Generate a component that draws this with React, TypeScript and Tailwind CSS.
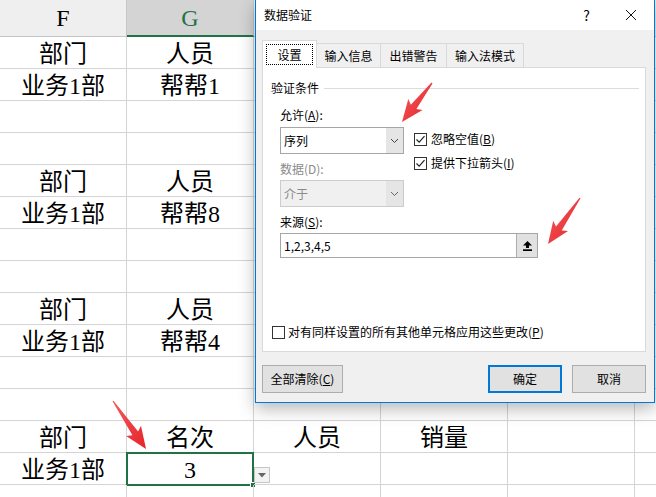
import React from "react";

type Row = [string, string, string, string];

const rows: Row[] = [
  ["部门", "人员", "", ""],
  ["业务1部", "帮帮1", "", ""],
  ["", "", "", ""],
  ["", "", "", ""],
  ["部门", "人员", "", ""],
  ["业务1部", "帮帮8", "", ""],
  ["", "", "", ""],
  ["", "", "", ""],
  ["部门", "人员", "", ""],
  ["业务1部", "帮帮4", "", ""],
  ["", "", "", ""],
  ["", "", "", ""],
  ["部门", "名次", "人员", "销量"],
  ["业务1部", "3", "", ""],
  ["", "", "", ""],
];

function arrowPoints(x1: number, y1: number, x2: number, y2: number) {
  const dx = x2 - x1;
  const dy = y2 - y1;
  const L = Math.hypot(dx, dy);
  const ux = dx / L;
  const uy = dy / L;
  const nx = -uy;
  const ny = ux;
  const hl = 19;
  const hw = 9;
  const sw = 3.5;
  const notch = 3;
  const bx = x2 - ux * hl;
  const by = y2 - uy * hl;
  const kx = x2 - ux * (hl + notch);
  const ky = y2 - uy * (hl + notch);
  const p = (x: number, y: number) => `${x.toFixed(1)},${y.toFixed(1)}`;
  return [
    p(x1 + nx * 0.6, y1 + ny * 0.6),
    p(bx + nx * sw, by + ny * sw),
    p(kx + nx * hw, ky + ny * hw),
    p(x2, y2),
    p(kx - nx * hw, ky - ny * hw),
    p(bx - nx * sw, by - ny * sw),
    p(x1 - nx * 0.6, y1 - ny * 0.6),
  ].join(" ");
}

function Check() {
  return (
    <span className="w-[13px] h-[13px] border border-[#333333] bg-white flex items-center justify-center">
      <svg width="11" height="11" viewBox="0 0 11 11">
        <polyline points="1.5,5.5 4.2,8.2 9.5,2.2" fill="none" stroke="#222" strokeWidth="1.2" />
      </svg>
    </span>
  );
}

function Chevron({ color = "#444" }: { color?: string }) {
  return (
    <svg width="9" height="6" viewBox="0 0 9 6">
      <polyline points="1,1 4.5,4.5 8,1" fill="none" stroke={color} strokeWidth="1" />
    </svg>
  );
}

function Btn({ children, w, primary }: { children: React.ReactNode; w: string; primary?: boolean }) {
  return (
    <div
      className={`${w} h-[28px] bg-[#e1e1e1] flex items-center justify-center ${
        primary ? "border-2 border-[#0078d7]" : "border border-[#adadad]"
      }`}
    >
      {children}
    </div>
  );
}

export default function App() {
  return (
    <div className="relative w-[656px] h-[497px] overflow-hidden bg-white">
      {/* spreadsheet */}
      <div className="flex flex-col font-['Liberation_Serif','Noto_Sans_CJK_SC',serif] text-black">
        <div className="flex h-[37px]">
          <div className="w-[127px] bg-[#efefef] border-r border-b border-[#c6c6c6] flex items-center justify-center text-[24px] leading-none">
            F
          </div>
          <div className="w-[127px] bg-[#d4d4d4] border-r border-[#c6c6c6] border-b-2 border-b-[#217346] flex items-center justify-center text-[24px] leading-none text-[#217346]">
            G
          </div>
          <div className="w-[127px] bg-[#efefef] border-r border-b border-[#c6c6c6]" />
          <div className="w-[127px] bg-[#efefef] border-r border-b border-[#c6c6c6]" />
          <div className="w-[127px] bg-[#efefef] border-r border-b border-[#c6c6c6]" />
          <div className="flex-1 bg-[#efefef] border-b border-[#c6c6c6]" />
        </div>
        {rows.map((r, i) => (
          <div key={i} className="flex h-[32px]">
            {r.map((c, j) => (
              <div
                key={j}
                className="relative w-[127px] border-r border-b border-[#d4d4d4] flex items-center justify-center pt-[3px] text-[24px] leading-none"
              >
                {c}
                {i === 13 && j === 1 && (
                  <>
                    <div className="absolute -left-px -top-px w-[128px] h-[34px] border-2 border-[#217346]" />
                    <div className="absolute right-[-3px] bottom-[-4px] w-[6px] h-[6px] bg-[#217346] border border-white" />
                    <div className="absolute left-[calc(100%+1px)] top-[14px] w-[16px] h-[16px] bg-[#f3f3f3] border border-[#c6c6c6] flex items-center justify-center">
                      <svg width="8" height="5" viewBox="0 0 8 5">
                        <polygon points="0,0 8,0 4,4.5" fill="#666" />
                      </svg>
                    </div>
                  </>
                )}
              </div>
            ))}
            <div className="w-[127px] border-r border-b border-[#d4d4d4]" />
            <div className="flex-1 border-b border-[#d4d4d4]" />
          </div>
        ))}
      </div>

      {/* dialog */}
      <div className="absolute left-[255px] top-0 w-[400px] h-[403px] bg-[#f0f0f0] border border-t-0 border-[#0078d7] shadow-[0_6px_16px_rgba(0,0,0,0.28)] flex flex-col font-['Noto_Sans_CJK_SC',sans-serif] text-[12px] leading-[16px] text-black">
        <div className="h-[30px] bg-white flex items-center pl-[8px] pr-[17px]">
          <span>数据验证</span>
          <span className="ml-auto text-[14px] mr-[35px]">?</span>
          <svg width="12" height="12" viewBox="0 0 12 12">
            <path d="M1 1 L11 11 M11 1 L1 11" stroke="#111" strokeWidth="1" />
          </svg>
        </div>
        <div className="flex flex-col pl-[6px] pr-[8px]">
          <div className="flex items-end mt-[10px] relative z-10 -mb-px">
            <div className="w-[55px] h-[28px] bg-white border border-b-0 border-[#d9d9d9] pt-[3px] px-[3px]">
              <div className="h-[21px] border border-dotted border-black flex items-center justify-center">设置</div>
            </div>
            <div className="w-[64px] h-[25px] border-t border-r border-[#d9d9d9] flex items-center justify-center">输入信息</div>
            <div className="w-[66px] h-[25px] border-t border-r border-[#d9d9d9] flex items-center justify-center">出错警告</div>
            <div className="w-[77px] h-[25px] border-t border-r border-[#d9d9d9] flex items-center justify-center">输入法模式</div>
          </div>
          <div className="h-[285px] bg-white border border-[#d9d9d9] flex flex-col">
            <div className="mt-[12px] ml-[8px] mr-[6px] h-[16px] flex items-center">
              <span>验证条件</span>
              <div className="flex-1 h-px bg-[#dcdcdc] ml-[5px]" />
            </div>
            <div className="pl-[17px] flex">
              <div className="w-[124px] flex flex-col">
                <div className="mt-[11px] h-[16px]">
                  允许(<span className="underline">A</span>):
                </div>
                <div className="mt-[4px] h-[27px] border border-[#a6a6a6] flex">
                  <div className="flex-1 flex items-center pl-[3px]">序列</div>
                  <div className="w-[17px] bg-[#e5e5e5] flex items-center justify-center">
                    <Chevron />
                  </div>
                </div>
                <div className="mt-[7px] h-[16px] text-[#8a8a8a]">数据(D):</div>
                <div className="mt-[3px] h-[27px] border border-[#cccccc] bg-[#f0f0f0] flex">
                  <div className="flex-1 flex items-center pl-[3px] text-[#8a8a8a]">介于</div>
                  <div className="w-[17px] bg-[#e5e5e5] flex items-center justify-center">
                    <Chevron color="#666" />
                  </div>
                </div>
              </div>
              <div className="ml-[10px] flex flex-col">
                <div className="mt-[35px] h-[16px] flex items-center gap-[4px]">
                  <Check />
                  <span>
                    忽略空值(<span className="underline">B</span>)
                  </span>
                </div>
                <div className="mt-[8px] h-[16px] flex items-center gap-[4px]">
                  <Check />
                  <span>
                    提供下拉箭头(<span className="underline">I</span>)
                  </span>
                </div>
              </div>
            </div>
            <div className="pl-[17px] flex flex-col">
              <div className="mt-[7px] h-[16px]">
                来源(<span className="underline">S</span>):
              </div>
              <div className="mt-[3px] w-[258px] h-[25px] border border-[#a6a6a6] flex">
                <div className="flex-1 flex items-center pl-[3px]">1,2,3,4,5</div>
                <div className="w-[21px] bg-[#e1e1e1] border-l border-[#adadad] flex items-center justify-center">
                  <svg width="9" height="10" viewBox="0 0 9 10">
                    <polygon points="4.5,0 9,4.5 6,4.5 6,7 3,7 3,4.5 0,4.5" fill="#000" />
                    <rect x="0" y="8.3" width="9" height="1.7" fill="#000" />
                  </svg>
                </div>
              </div>
            </div>
            <div className="mt-auto mb-[11px] ml-[9px] h-[16px] flex items-center gap-[3px]">
              <span className="w-[13px] h-[13px] border border-[#333333] bg-white" />
              <span>
                对有同样设置的所有其他单元格应用这些更改(<span className="underline">P</span>)
              </span>
            </div>
          </div>
          <div className="mt-[13px] flex items-center">
            <Btn w="w-[81px]">
              全部清除(<span className="underline">C</span>)
            </Btn>
            <div className="ml-auto flex gap-[10px]">
              <Btn w="w-[74px]" primary>
                确定
              </Btn>
              <Btn w="w-[74px]">取消</Btn>
            </div>
          </div>
        </div>
      </div>

      {/* red arrows */}
      <svg className="absolute left-0 top-0 pointer-events-none" width="656" height="497" viewBox="0 0 656 497">
        <defs>
          <linearGradient id="rg" x1="0" y1="0" x2="1" y2="1">
            <stop offset="0" stopColor="#f25a5e" />
            <stop offset="1" stopColor="#e62429" />
          </linearGradient>
        </defs>
        <polygon points={arrowPoints(432, 83, 402, 122)} fill="url(#rg)" />
        <polygon points={arrowPoints(580, 198, 548, 244)} fill="url(#rg)" />
        <polygon points={arrowPoints(113, 401, 146, 449)} fill="url(#rg)" />
      </svg>
    </div>
  );
}
